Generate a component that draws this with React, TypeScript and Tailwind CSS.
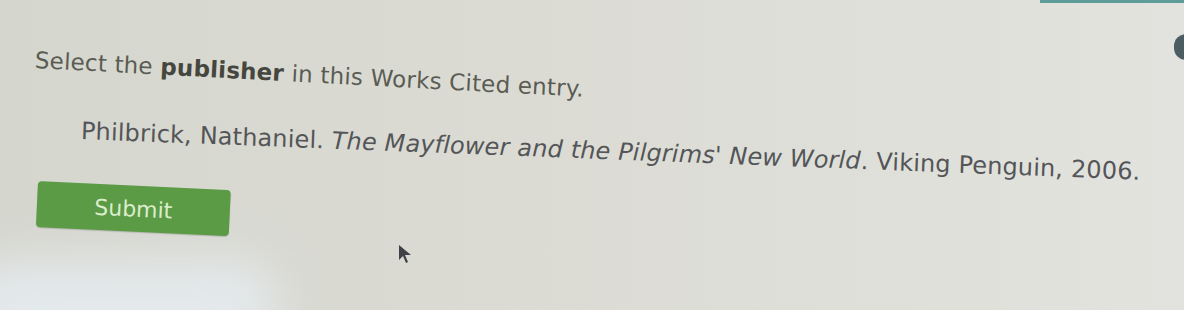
export default function App() {
  return (
    <div className="relative h-[310px] w-[1184px] overflow-hidden bg-gradient-to-r from-[#d5d6ce] via-[#dcdcd5] to-[#e2e3de] font-['DejaVu_Sans',Verdana,sans-serif]">
      {/* glare at the bottom left of the photo */}
      <div className="absolute bottom-[-40px] left-[-40px] h-[90px] w-[320px] rounded-full bg-[#e4e9ec] blur-xl" />
      {/* teal strip and round control at the top right */}
      <div className="absolute right-0 top-0 h-[3px] w-[144px] bg-[#5e9c9a]" />
      <div className="absolute right-[-14px] top-[34px] h-[26px] w-[24px] rounded-full bg-[#4c5c63]" />

      <div className="relative flex flex-col items-start pt-[45px]">
        <p className="ml-[35px] origin-left rotate-[3deg] whitespace-nowrap text-[23px] leading-[30px] tracking-[0.2px] text-[#5a5c53]">
          Select the <b className="font-bold text-[#45463d]">publisher</b> in this Works Cited entry.
        </p>
        <p className="ml-[81px] mt-[41px] origin-left rotate-[2.2deg] whitespace-nowrap text-[24px] leading-[30px] tracking-[0.15px] text-[#535558]">
          Philbrick, Nathaniel. <i>The Mayflower and the Pilgrims' New World</i>. Viking Penguin, 2006.
        </p>
        <button className="ml-[37px] mt-[35px] h-[46px] w-[193px] origin-left rotate-[2.7deg] rounded-[4px] bg-[#5b9b46] text-[22px] text-[#dcedcc] shadow-[0_1px_1px_rgba(0,0,0,0.15)]">
          Submit
        </button>
      </div>

      {/* mouse pointer */}
      <svg className="absolute left-[398px] top-[244px]" width="16" height="22" viewBox="0 0 16 22">
        <path d="M1 1 L1 16 L5 12 L8 19 L10 18 L7 11 L13 11 Z" fill="#3e4248" />
      </svg>
    </div>
  );
}
